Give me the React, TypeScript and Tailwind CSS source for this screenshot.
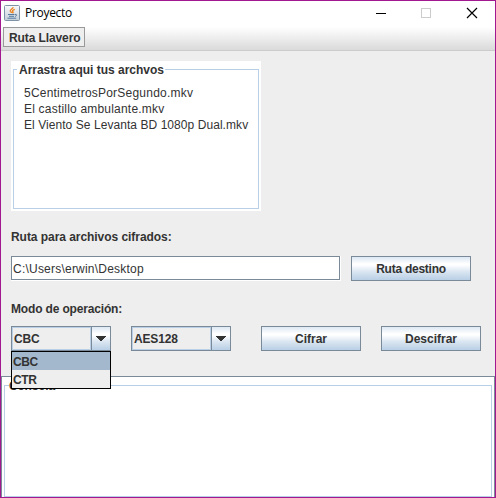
import type { ReactNode } from "react";

function JavaIcon() {
  return (
    <svg width="16" height="16" viewBox="0 0 16 16" className="block">
      <defs>
        <linearGradient id="java" x1="0" y1="0" x2="0" y2="1">
          <stop offset="0" stopColor="#f8fafb" />
          <stop offset="1" stopColor="#c3ced8" />
        </linearGradient>
      </defs>
      <rect x="0.5" y="0.5" width="15" height="15" rx="1" fill="url(#java)" stroke="#7f93a6" />
      <path d="M9 2.200c.4 1.600-3.300 2.200-2.700 4 .3.800 1.200 1 1.300 1.800M10.800 4.400c-2.400.9-2.800 1.500-2 2.400.5.600.2 1-.3 1.400" fill="none" stroke="#ee8420" strokeWidth="1.400" />
      <path d="M4 9.500h6.500M5 11.300h5M3.500 13.200h8.700M11 9.500c2.200-.6 2.200 1.300 0 2" fill="none" stroke="#557a9e" strokeWidth="1" />
    </svg>
  );
}

function TitleBar() {
  return (
    <header className="flex h-[26px] shrink-0 bg-white">
      <div className="ml-[3px] mt-1 w-4">
        <JavaIcon />
      </div>
      <h1 className="ml-[5px] mt-[4px] font-['Open_Sans','Noto_Sans',sans-serif] text-[12px] leading-4 tracking-[-0.3px] text-black">
        Proyecto
      </h1>
      <svg width="104" height="12" viewBox="0 0 104 12" className="ml-auto mr-[16px] mt-[6px]" shapeRendering="crispEdges">
        <path d="M1 6.500h10" stroke="#000" />
        <rect x="46.500" y="1.500" width="9" height="9" fill="none" stroke="#ccc" />
        <path d="M92 1l10 10M102 1l-10 10" stroke="#000" strokeWidth="1.200" shapeRendering="auto" />
      </svg>
    </header>
  );
}

function Button({ children, className }: { children: ReactNode; className: string }) {
  return (
    <button
      className={`flex h-[25px] items-center justify-center border border-[#7a8a99] bg-[linear-gradient(#dde8f3_0%,#fff_30%,#fff_35%,#dce7f2_62%,#b8cfe5_100%)] font-bold ${className}`}
    >
      {children}
    </button>
  );
}

function Combo({ value, children }: { value: string; children?: ReactNode }) {
  return (
    <div className="relative h-[25px] w-[100px]">
      <div className="flex h-full border border-[#7a8a99]">
        <div className="flex flex-1 items-center border border-[#b8cfe5] pl-px font-bold tracking-[-0.15px]">
          <span>{value}</span>
        </div>
        <div className="flex w-[19px] items-center justify-center border-l border-[#7a8a99] bg-[linear-gradient(#dde8f3_0%,#fff_30%,#fff_35%,#dce7f2_62%,#b8cfe5_100%)]">
          <svg width="10" height="5" viewBox="0 0 10 5" shapeRendering="crispEdges">
            <path d="M0 0h10v1H9v1H8v1H7v1H6v1H4V4H3V3H2V2H1V1H0z" fill="#333" />
          </svg>
        </div>
      </div>
      {children}
    </div>
  );
}

export default function App() {
  return (
    <div className="flex h-[498px] w-[496px] flex-col overflow-hidden border border-[#a0198f] bg-[#eee] font-['Liberation_Sans',Arial,sans-serif] text-[12px] leading-4 text-[#333]">
      <TitleBar />
      <nav className="h-[24px] shrink-0 border-b border-[#ccc] bg-linear-to-b from-white to-[#dadada] pl-[2px]">
        <button className="flex h-5 w-[82px] items-center border border-[#999] bg-[#eee] pl-[5px] pt-px font-bold tracking-[-0.1px]">
          Ruta Llavero
        </button>
      </nav>
      <main className="flex h-[325px] shrink-0 flex-col pl-[10px] pt-[10px]">
        <section className="h-[150px] w-[250px] bg-white px-[2px] pb-[2px] pt-[8px]">
          <fieldset className="h-[140px] border border-[#b8cfe5] px-[10px]">
            <div className="-mt-[8px] -ml-[7px] w-fit bg-white pl-[2px] pr-px font-bold tracking-[-0.02px]">Arrastra aqui tus archvos</div>
            <ul className="mt-[7px] whitespace-nowrap">
              <li className="tracking-[0.22px]">5CentimetrosPorSegundo.mkv</li>
              <li className="tracking-[0.2px]">El castillo ambulante.mkv</li>
              <li className="tracking-[0.06px]">El Viento Se Levanta BD 1080p Dual.mkv</li>
            </ul>
          </fieldset>
        </section>
        <div className="mt-[18px] font-bold tracking-[-0.05px]">Ruta para archivos cifrados:</div>
        <div className="mt-[11px] flex gap-[10px]">
          <div className="h-[25px] w-[330px] border-b border-r border-white">
            <div className="flex h-[24px] w-[329px] items-center border border-[#7a8a99] bg-white pl-px pt-px tracking-[0.22px]">
              C:\Users\erwin\Desktop
            </div>
          </div>
          <Button className="w-[120px] tracking-[-0.25px]">Ruta destino</Button>
        </div>
        <div className="mt-[20px] font-bold tracking-[-0.16px]">Modo de operación:</div>
        <div className="mt-[9px] flex">
          <Combo value="CBC">
            <ul className="absolute left-0 top-[25px] z-10 h-[38px] w-[100px] border border-black bg-[#eee] font-bold tracking-[-0.4px]">
              <li className="h-[18px] bg-[#a3b8cc] pl-px pt-[2px]">CBC</li>
              <li className="h-[18px] pl-px pt-[2px]">CTR</li>
            </ul>
          </Combo>
          <div className="ml-[20px]">
            <Combo value="AES128" />
          </div>
          <Button className="ml-[30px] w-[100px]">Cifrar</Button>
          <Button className="ml-[20px] w-[100px]">Descifrar</Button>
        </div>
      </main>
      <section className="flex min-h-0 flex-1 border-l border-r border-t border-[#7a8a99] bg-white pl-[2px] pr-[2px] pt-[8px]">
        <div className="flex-1 border border-[#b8cfe5]">
          <div className="-mt-[8px] ml-[4px] w-fit bg-white pr-px font-bold tracking-[-0.2px]">Consola</div>
        </div>
      </section>
    </div>
  );
}
